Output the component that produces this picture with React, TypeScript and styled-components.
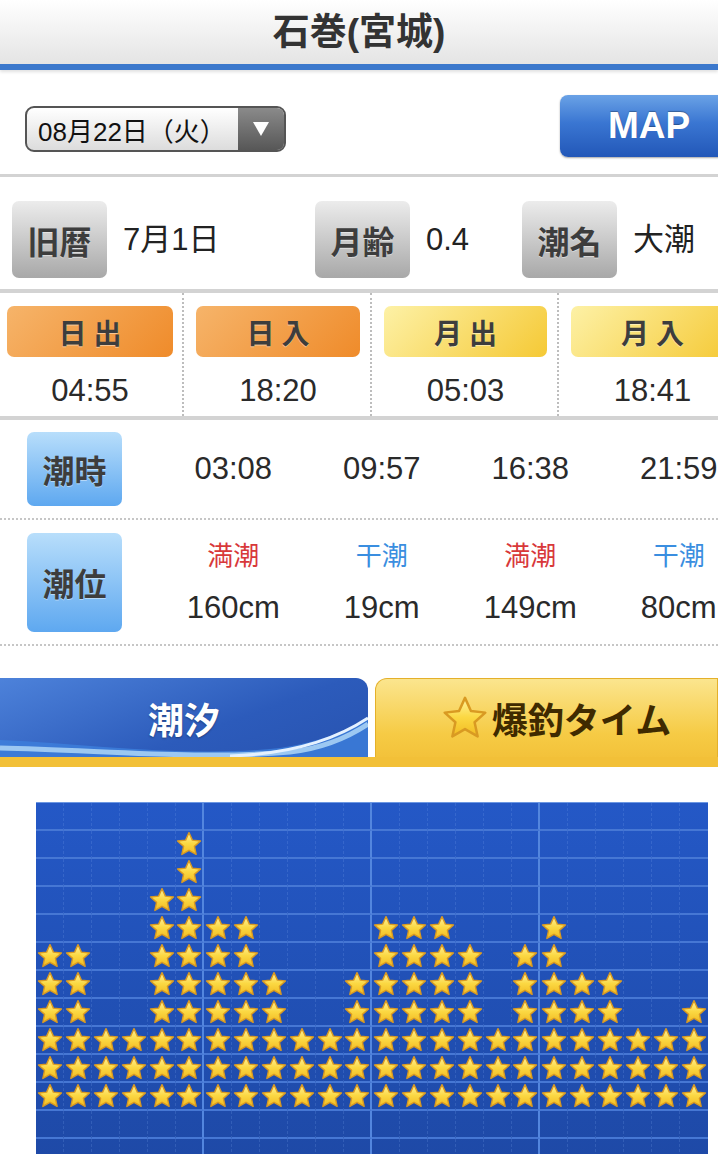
import React from 'react';
import styled, { createGlobalStyle } from 'styled-components';

const GlobalStyle = createGlobalStyle`
  * {
    box-sizing: border-box;
  }
  body {
    margin: 0;
    background: #fff;
    color: #333;
    font-family: "Liberation Sans", "Noto Sans CJK JP", sans-serif;
    overflow-x: hidden;
  }
`;

const Page = styled.div`
  width: 718px;
  overflow: hidden;
`;

const Header = styled.header`
  height: 70px;
  display: flex;
  align-items: center;
  justify-content: center;
  padding-bottom: 6px;
  background: linear-gradient(#ffffff, #e4e4e4);
  border-bottom: 6px solid #3b78cc;
  box-shadow: 0 2px 3px rgba(0, 0, 0, 0.12);
`;

const Title = styled.h1`
  margin: 0;
  font-size: 37px;
  font-weight: bold;
  color: #333;
`;

const Controls = styled.div`
  height: 107px;
  display: flex;
  justify-content: space-between;
  align-items: flex-start;
  padding-left: 25px;
  border-bottom: 3px solid #d3d3d3;
`;

const Select = styled.div`
  margin-top: 36px;
  width: 261px;
  height: 46px;
  border: 2px solid #555;
  border-radius: 9px;
  display: flex;
  overflow: hidden;
  background: linear-gradient(#ffffff, #dcdcdc);
`;

const SelectText = styled.span`
  flex: 1;
  display: flex;
  align-items: center;
  padding-left: 11px;
  font-size: 26px;
  color: #111;
`;

const SelectArrow = styled.span`
  width: 46px;
  display: flex;
  align-items: center;
  justify-content: center;
  background: linear-gradient(#8a8a8a, #575757);
`;

const MapButton = styled.button`
  margin-top: 25px;
  margin-right: -20px;
  width: 178px;
  height: 62px;
  border: none;
  border-radius: 8px;
  background: linear-gradient(#6aa2e6, #3a76d2 45%, #2257b8);
  box-shadow: 0 1px 2px rgba(0, 0, 0, 0.35);
  color: #fff;
  font-family: "Liberation Sans", sans-serif;
  font-size: 37px;
  font-weight: bold;
  text-shadow: 0 -1px 1px rgba(0, 0, 0, 0.3);
`;

const InfoRow = styled.div`
  display: grid;
  grid-template-columns: 315px 207px 1fr;
  height: 112px;
  padding-top: 24px;
`;

const InfoItem = styled.div<{ $first?: boolean }>`
  display: flex;
  align-items: flex-start;
  padding-left: ${p => (p.$first ? 12 : 0)}px;
`;

const Badge = styled.div<{ $tone: 'gray' | 'orange' | 'yellow' | 'blue'; $h: number; $w?: number }>`
  width: ${p => (p.$w ? `${p.$w}px` : '100%')};
  height: ${p => p.$h}px;
  border-radius: 7px;
  display: flex;
  align-items: center;
  justify-content: center;
  font-weight: bold;
  color: #3d3d3d;
  text-shadow: 0 1px 0 rgba(255, 255, 255, 0.45);
  background: ${p =>
    ({
      gray: 'linear-gradient(#ececec, #a8a8a8)',
      orange: 'linear-gradient(135deg, #f6b46a, #ef8b2a)',
      yellow: 'linear-gradient(135deg, #fdf1a6, #f5c935)',
      blue: 'linear-gradient(#b8defb, #5ea8f0)',
    })[p.$tone]};
`;

const BadgeText = styled.span<{ $size: number; $spread?: number }>`
  font-size: ${p => p.$size}px;
  letter-spacing: ${p => p.$spread || 0}px;
  text-indent: ${p => p.$spread || 0}px;
`;

const InfoValue = styled.span`
  margin-left: 16px;
  font-size: 31px;
  line-height: 77px;
  color: #222;
`;

const SunRow = styled.div`
  display: grid;
  grid-template-columns: 182px 188px 187px 187px;
  height: 131px;
  border-top: 4px solid #d3d3d3;
  border-bottom: 4px solid #d3d3d3;
`;

const SunCell = styled.div<{ $first?: boolean }>`
  padding: 13px ${p => (p.$first ? '9px 0 7px' : '10px 0 12px')};
  border-left: ${p => (p.$first ? 'none' : '2px dotted #bdbdbd')};
`;

const Time = styled.div`
  margin-top: 16px;
  text-align: center;
  font-size: 31px;
  line-height: 36px;
  color: #2a2a2a;
`;

const TideRow = styled.div<{ $h: number }>`
  display: grid;
  grid-template-columns: 159px repeat(4, 148.5px);
  align-items: center;
  height: ${p => p.$h}px;
  border-bottom: 2px dotted #c6c6c6;
`;

const TideHead = styled.div`
  padding-left: 27px;
`;

const TideValue = styled.div`
  display: flex;
  flex-direction: column;
  align-items: center;
  gap: 22px;
  font-size: 31px;
  line-height: 30px;
  color: #2a2a2a;
  white-space: nowrap;
`;

const TideKind = styled.span<{ $high: boolean }>`
  font-size: 26px;
  color: ${p => (p.$high ? '#d8383a' : '#3a8ee0')};
`;

const TabBar = styled.div`
  margin-top: 32px;
  display: flex;
  height: 89px;
  border-bottom: 10px solid #f2c038;
`;

const TideTab = styled.div`
  position: relative;
  width: 368px;
  overflow: hidden;
  display: flex;
  align-items: center;
  justify-content: center;
  border-radius: 0 12px 0 0;
  background: linear-gradient(160deg, #4d82da, #2c5bbb 60%, #2853b0);
  color: #fff;
  font-size: 36px;
  font-weight: bold;
  text-shadow: 0 1px 2px rgba(0, 0, 0, 0.35);
`;

const TabWave = styled.svg`
  position: absolute;
  left: 0;
  bottom: 0;
`;

const TabLabel = styled.span`
  position: relative;
`;

const FishTab = styled.div`
  flex: 1;
  margin-left: 7px;
  display: flex;
  align-items: center;
  justify-content: center;
  gap: 4px;
  padding-left: 20px;
  border: 1px solid #e4b02a;
  border-bottom: none;
  border-radius: 12px 0 0 0;
  background: linear-gradient(#fbe58e, #f6cb45 70%, #f3c23a);
  color: #3f2a00;
  font-size: 36px;
  font-weight: bold;
`;

const Chart = styled.div`
  margin: 35px 0 0 36px;
  width: 672px;
  display: grid;
  grid-template-columns: repeat(24, 28px);
  grid-auto-rows: 28px;
  background: linear-gradient(#2458c6, #1e49a6);
  border-top: 1px solid #6c97e2;
`;

const Cell = styled.div<{ $col: number }>`
  display: flex;
  align-items: center;
  justify-content: center;
  border-bottom: 2px solid #4677d4;
  border-right: ${p =>
    p.$col === 23
      ? 'none'
      : p.$col % 6 === 5
        ? '2px solid #5386de'
        : '1px dashed rgba(130, 170, 240, 0.2)'};
`;

const HOURS = [6, 6, 3, 3, 8, 10, 7, 7, 5, 3, 3, 5, 7, 7, 7, 6, 3, 6, 7, 5, 5, 3, 3, 4];
const ROWS = 13;
const BASE_ROW = 10;

const SUN = [
  { label: '日出', time: '04:55', tone: 'orange' as const },
  { label: '日入', time: '18:20', tone: 'orange' as const },
  { label: '月出', time: '05:03', tone: 'yellow' as const },
  { label: '月入', time: '18:41', tone: 'yellow' as const },
];

const TIDES = [
  { time: '03:08', high: true, level: '160cm' },
  { time: '09:57', high: false, level: '19cm' },
  { time: '16:38', high: true, level: '149cm' },
  { time: '21:59', high: false, level: '80cm' },
];

const STAR = '12,1.5 15.1,8.4 22.6,9.2 17,14.2 18.6,21.6 12,17.8 5.4,21.6 7,14.2 1.4,9.2 8.9,8.4';

function Star({ size }: { size: number }) {
  return (
    <svg width={size} height={size} viewBox="0 0 24 24">
      <polygon points={STAR} fill="url(#starFill)" stroke="#d99a22" strokeWidth="1.3" strokeLinejoin="round" />
    </svg>
  );
}

export default function App() {
  return (
    <Page>
      <GlobalStyle />
      <svg width="0" height="0" style={{ position: 'absolute' }}>
        <defs>
          <linearGradient id="starFill" x1="0" y1="0" x2="0" y2="1">
            <stop offset="0" stopColor="#fff3a0" />
            <stop offset="0.5" stopColor="#fbd843" />
            <stop offset="1" stopColor="#f2bb22" />
          </linearGradient>
        </defs>
      </svg>

      <Header>
        <Title>石巻(宮城)</Title>
      </Header>

      <Controls>
        <Select>
          <SelectText>08月22日（火）</SelectText>
          <SelectArrow>
            <svg width="18" height="16" viewBox="0 0 18 16">
              <polygon points="1,1 17,1 9,15" fill="#fff" />
            </svg>
          </SelectArrow>
        </Select>
        <MapButton>MAP</MapButton>
      </Controls>

      <InfoRow>
        <InfoItem $first>
          <Badge $tone="gray" $h={77} $w={95}>
            <BadgeText $size={32}>旧暦</BadgeText>
          </Badge>
          <InfoValue>7月1日</InfoValue>
        </InfoItem>
        <InfoItem>
          <Badge $tone="gray" $h={77} $w={95}>
            <BadgeText $size={32}>月齢</BadgeText>
          </Badge>
          <InfoValue>0.4</InfoValue>
        </InfoItem>
        <InfoItem>
          <Badge $tone="gray" $h={77} $w={95}>
            <BadgeText $size={32}>潮名</BadgeText>
          </Badge>
          <InfoValue>大潮</InfoValue>
        </InfoItem>
      </InfoRow>

      <SunRow>
        {SUN.map((s, i) => (
          <SunCell key={s.label} $first={i === 0}>
            <Badge $tone={s.tone} $h={51}>
              <BadgeText $size={28} $spread={7}>{s.label}</BadgeText>
            </Badge>
            <Time>{s.time}</Time>
          </SunCell>
        ))}
      </SunRow>

      <TideRow $h={100}>
        <TideHead>
          <Badge $tone="blue" $h={74} $w={95}>
            <BadgeText $size={32}>潮時</BadgeText>
          </Badge>
        </TideHead>
        {TIDES.map(t => (
          <TideValue key={t.time}>{t.time}</TideValue>
        ))}
      </TideRow>
      <TideRow $h={126}>
        <TideHead>
          <Badge $tone="blue" $h={99} $w={95}>
            <BadgeText $size={32}>潮位</BadgeText>
          </Badge>
        </TideHead>
        {TIDES.map(t => (
          <TideValue key={t.time}>
            <TideKind $high={t.high}>{t.high ? '満潮' : '干潮'}</TideKind>
            {t.level}
          </TideValue>
        ))}
      </TideRow>

      <TabBar>
        <TideTab>
          <TabWave width="368" height="79" viewBox="0 0 368 79">
            <path d="M0 62 C 90 66, 190 80, 280 70 C 320 64, 350 52, 368 40 L368 79 L0 79 Z" fill="#3d7fdc" opacity="0.8" />
            <path d="M0 70 C 100 72, 200 82, 290 74 C 325 70, 350 58, 368 46" fill="none" stroke="#9cc8f2" strokeWidth="5" />
            <path d="M230 78 C 290 76, 335 62, 368 40" fill="none" stroke="#e4f1ff" strokeWidth="3" />
          </TabWave>
          <TabLabel>潮汐</TabLabel>
        </TideTab>
        <FishTab>
          <Star size={46} />
          <span>爆釣タイム</span>
        </FishTab>
      </TabBar>

      <Chart>
        {Array.from({ length: ROWS * 24 }, (_, k) => {
          const row = Math.floor(k / 24);
          const col = k % 24;
          const lit = row <= BASE_ROW && row > BASE_ROW - HOURS[col];
          return (
            <Cell key={k} $col={col}>
              {lit && <Star size={26} />}
            </Cell>
          );
        })}
      </Chart>
    </Page>
  );
}
